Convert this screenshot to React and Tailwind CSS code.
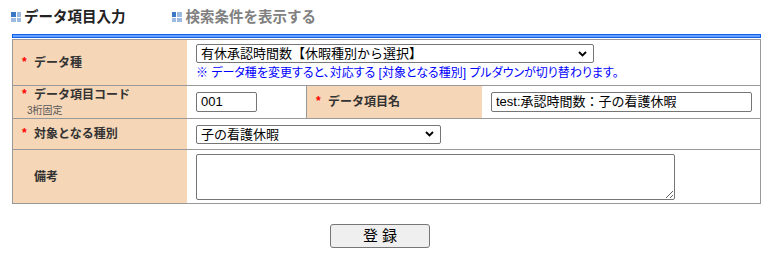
import React from "react";

const FONT = "font-['Liberation_Sans','Noto_Sans_CJK_JP',sans-serif]";

function TabIcon() {
  return (
    <div className="grid grid-cols-2 gap-[1px] w-[10px] h-[10px] shrink-0">
      <div className="bg-[#3b78c6]" />
      <div className="bg-[#9dbbe2]" />
      <div className="bg-[#9dbbe2]" />
      <div className="bg-[#9dbbe2]" />
    </div>
  );
}

function Chevron() {
  return (
    <svg width="9" height="6" viewBox="0 0 9 6" className="shrink-0">
      <path d="M1 1 L4.5 4.5 L8 1" fill="none" stroke="#000" strokeWidth="1.8" />
    </svg>
  );
}

function Select({ value, className }) {
  return (
    <div
      className={`flex items-center justify-between border border-[#767676] rounded-[2px] bg-white pl-[4px] pr-[6px] text-[13px] leading-[15px] text-black ${className}`}
    >
      <span className="whitespace-nowrap">{value}</span>
      <Chevron />
    </div>
  );
}

function Label({ text, required = true, sub, className = "" }) {
  return (
    <div className={`bg-[#f5d6b7] flex flex-col justify-center pl-[9px] ${className}`}>
      <div className="flex items-center">
        <span className="w-[12px] text-[#ff0000] text-[12px] font-bold leading-[14px] -mt-[2px]">
          {required ? "*" : ""}
        </span>
        <span className="text-[12px] font-bold text-[#333] leading-[16px]">{text}</span>
      </div>
      {sub && <div className="pl-[5px] text-[10px] leading-[12px] text-[#555] mt-[2px]">{sub}</div>}
    </div>
  );
}

export default function App() {
  return (
    <div className={`w-[776px] h-[262px] bg-white ${FONT}`}>
      <div className="h-[34px] flex items-center pl-[11px]">
        <div className="flex items-center gap-[3px]">
          <TabIcon />
          <span className="text-[14.5px] font-bold text-[#222] leading-[18px]">データ項目入力</span>
        </div>
        <div className="flex items-center gap-[4px] ml-[46px]">
          <TabIcon />
          <span className="text-[14.5px] font-bold text-[#808080] leading-[18px]">検索条件を表示する</span>
        </div>
      </div>
      <div className="ml-[12px] w-[749px] h-[4px] border border-[#1560e6] bg-[#66a2ff]" />
      <div className="ml-[12px] mt-[1px] w-[749px] border border-[#999]">
        <div className="flex h-[46px] border-b border-[#999]">
          <Label text="データ種" className="w-[174px]" />
          <div className="flex-1 pl-[9px] pt-[4px] flex flex-col">
            <Select value="有休承認時間数【休暇種別から選択】" className="w-[398px] h-[19px]" />
            <div className="mt-[3px] text-[12px] leading-[15px] text-[#0000ff] whitespace-nowrap [font-feature-settings:'palt']">
              ※ データ種を変更すると、対応する [対象となる種別] プルダウンが切り替わります。
            </div>
          </div>
        </div>
        <div className="flex h-[33px] border-b border-[#999]">
          <Label text="データ項目コード" sub="3桁固定" className="w-[174px]" />
          <div className="w-[120px] border-r border-[#999] pl-[9px] flex items-center">
            <div className="w-[61px] h-[20px] border border-[#767676] rounded-[2px] pl-[4px] flex items-center text-[13px] text-black">
              001
            </div>
          </div>
          <Label text="データ項目名" className="w-[175px] !pl-[9px]" />
          <div className="flex-1 pl-[9px] flex items-center">
            <div className="w-[261px] h-[20px] border border-[#767676] rounded-[2px] pl-[4px] flex items-center text-[13px] text-black whitespace-nowrap">
              test:承認時間数：子の看護休暇
            </div>
          </div>
        </div>
        <div className="flex h-[31px] border-b border-[#999]">
          <Label text="対象となる種別" className="w-[174px]" />
          <div className="flex-1 pl-[9px] flex items-center">
            <Select value="子の看護休暇" className="w-[245px] h-[19px]" />
          </div>
        </div>
        <div className="flex h-[53px]">
          <Label text="備考" required={false} className="w-[174px]" />
          <div className="flex-1 pl-[9px] flex items-center">
            <textarea className="w-[479px] h-[46px] border border-[#767676] rounded-[2px] bg-white block" />
          </div>
        </div>
      </div>
      <div className="flex justify-center mt-[20px] pr-[16px]">
        <button className="w-[100px] h-[24px] bg-[#efefef] border border-[#767676] rounded-[3px] text-[15px] leading-[18px] text-black">
          登 録
        </button>
      </div>
    </div>
  );
}
